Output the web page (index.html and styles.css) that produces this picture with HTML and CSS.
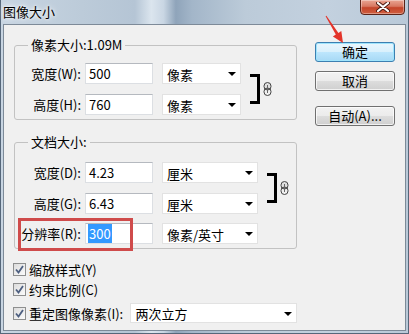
FILE: index.html
```html
<!DOCTYPE html>
<html lang="zh-CN">

<head>
    <meta charset="UTF-8">
    <meta name="viewport" content="width=device-width, initial-scale=1.0">
    <title>图像大小</title>
    <link rel="stylesheet" href="styles.css">
</head>

<body>
    <div class="window">
        <div class="titlebar">
            <span class="title">图像大小</span>
            <div class="close">
                <svg width="14" height="10" viewBox="0 0 14 10">
                    <path d="M2 1 L12 9 M12 1 L2 9" stroke="#4a1a12" stroke-width="4" stroke-linecap="round" />
                    <path d="M2 1 L12 9 M12 1 L2 9" stroke="#fff" stroke-width="2.2" stroke-linecap="round" />
                </svg>
            </div>
        </div>

        <div class="client">
            <div class="main">
                <fieldset class="group group-pixel">
                    <legend>像素大小:1.09M</legend>
                    <div class="linked">
                        <div class="rows">
                            <div class="row">
                                <span class="label">宽度(W):</span>
                                <span class="field">500</span>
                                <span class="combo">像素<i class="arrow"></i></span>
                            </div>
                            <div class="row">
                                <span class="label">高度(H):</span>
                                <span class="field">760</span>
                                <span class="combo">像素<i class="arrow"></i></span>
                            </div>
                        </div>
                        <span class="bracket"></span>
                        <svg class="chain" width="9" height="14" viewBox="0 0 9 14">
                            <rect x="1" y="0.5" width="7" height="7.5" rx="3.5" fill="#e0e0e0" stroke="#444" />
                            <rect x="1" y="6" width="7" height="7.5" rx="3.5" fill="none" stroke="#444" />
                            <line x1="4.5" y1="3" x2="4.5" y2="11" stroke="#666" />
                        </svg>
                    </div>
                </fieldset>

                <fieldset class="group group-doc">
                    <legend>文档大小:</legend>
                    <div class="linked">
                        <div class="rows">
                            <div class="row">
                                <span class="label">宽度(D):</span>
                                <span class="field">4.23</span>
                                <span class="combo wide">厘米<i class="arrow"></i></span>
                            </div>
                            <div class="row">
                                <span class="label">高度(G):</span>
                                <span class="field">6.43</span>
                                <span class="combo wide">厘米<i class="arrow"></i></span>
                            </div>
                        </div>
                        <span class="bracket"></span>
                        <svg class="chain" width="9" height="14" viewBox="0 0 9 14">
                            <rect x="1" y="0.5" width="7" height="7.5" rx="3.5" fill="#e0e0e0" stroke="#444" />
                            <rect x="1" y="6" width="7" height="7.5" rx="3.5" fill="none" stroke="#444" />
                            <line x1="4.5" y1="3" x2="4.5" y2="11" stroke="#666" />
                        </svg>
                    </div>
                    <div class="row row-res">
                        <span class="label">分辨率(R):</span>
                        <span class="field"><span class="sel">300</span></span>
                        <span class="combo wide">像素/英寸<i class="arrow"></i></span>
                        <span class="mark"></span>
                    </div>
                </fieldset>

                <div class="check-row first">
                    <span class="check"><svg width="11" height="11" viewBox="0 0 11 11"><path d="M2 5.5 L4.5 8.5 L9 2" fill="none" stroke="#4d5f80" stroke-width="1.8" /></svg></span>
                    <span>缩放样式(Y)</span>
                </div>
                <div class="check-row">
                    <span class="check"><svg width="11" height="11" viewBox="0 0 11 11"><path d="M2 5.5 L4.5 8.5 L9 2" fill="none" stroke="#4d5f80" stroke-width="1.8" /></svg></span>
                    <span>约束比例(C)</span>
                </div>
                <div class="check-row resample">
                    <span class="check"><svg width="11" height="11" viewBox="0 0 11 11"><path d="M2 5.5 L4.5 8.5 L9 2" fill="none" stroke="#4d5f80" stroke-width="1.8" /></svg></span>
                    <span class="resample-label">重定图像像素(I):</span>
                    <span class="combo method">两次立方<i class="arrow"></i></span>
                </div>
            </div>

            <div class="actions">
                <button class="btn default">确定</button>
                <button class="btn">取消</button>
                <button class="btn auto">自动(A)...</button>
            </div>
        </div>

        <svg class="pointer" width="32" height="36" viewBox="0 0 32 36">
            <polygon points="5.6,6.3 6.4,5.7 18.4,22.9 21.3,21 23,33 12.9,26.4 15.8,24.5" fill="#e3342a" />
        </svg>
    </div>
</body>

</html>
```

FILE: styles.css
```css
body {
    margin: 0;
    font-family: 'Noto Sans CJK SC', 'Microsoft YaHei', sans-serif;
    font-size: 13px;
    color: #000;
}

.window {
    position: relative;
    width: 409px;
    height: 334px;
    display: flex;
    flex-direction: column;
    background: linear-gradient(90deg, #c8d5e2 0%, #bccbd9 20%, #b5c5d5 33%, #dbe5ee 37%, #c9d6e3 40%, #8fa4ba 43%, #a3b6c9 47%, #bccbd9 60%, #c3d1df 80%, #b9c9d8 100%);
    box-shadow: inset 1px 0 #56677a, inset -1px 0 #56677a, inset 0 -1px #56677a;
}

.titlebar {
    height: 24px;
    display: flex;
    justify-content: space-between;
    align-items: flex-start;
}

.title {
    padding: 3px 0 0 3px;
    line-height: 17px;
    font-size: 13px;
    text-shadow: 0 0 6px #fff, 0 0 3px #fff;
}

.close {
    width: 45px;
    height: 16px;
    margin: -1px 4px 0 0;
    box-sizing: border-box;
    border: 1px solid #5a2318;
    border-radius: 0 0 4px 4px;
    background: linear-gradient(#e9a593 0%, #d87862 45%, #c4442a 55%, #cf5f3f 100%);
    box-shadow: inset 0 0 0 1px rgba(255, 255, 255, 0.35);
    display: flex;
    justify-content: center;
    align-items: center;
}

.client {
    margin: 0 3px;
    height: 307px;
    box-sizing: border-box;
    border: 1px solid #7d8a98;
    background-color: #f0f0f0;
    display: flex;
}

.main {
    padding-left: 10px;
    width: 283px;
}

.group {
    margin: 13px 0 0;
    padding: 11px 0 4px;
    width: 283px;
    box-sizing: border-box;
    border: 1px solid #c2c2c2;
    border-radius: 3px;
    min-width: 0;
}

.group legend {
    margin-left: 13px;
    padding: 0 3px;
    line-height: 14px;
}

.group-doc {
    margin-top: 15px;
    padding-top: 13px;
}

.linked {
    display: flex;
    align-items: center;
}

.rows {
    display: flex;
    flex-direction: column;
    gap: 10px;
}

.row {
    display: flex;
    align-items: center;
    height: 21px;
}

.row-res {
    position: relative;
    margin-top: 9px;
}

.label {
    width: 66px;
    text-align: right;
    white-space: nowrap;
}

.field {
    margin-left: 4px;
    width: 68px;
    height: 21px;
    box-sizing: border-box;
    padding-left: 3px;
    line-height: 19px;
    background-color: #fff;
    border: 1px solid #dcdfe3;
    border-top-color: #b5b9bf;
}

.sel {
    background-color: #3399ff;
    color: #fff;
    padding: 0 1px;
    margin-left: -1px;
}

.combo {
    margin-left: 9px;
    width: 79px;
    height: 21px;
    box-sizing: border-box;
    padding: 1px 4px 0 4px;
    line-height: 19px;
    background-color: #fff;
    border: 1px solid #e2e2e2;
    display: flex;
    justify-content: space-between;
    align-items: center;
}

.combo.wide {
    width: 96px;
}

.arrow {
    width: 0;
    height: 0;
    border-left: 4px solid transparent;
    border-right: 4px solid transparent;
    border-top: 4px solid #000;
}

.bracket {
    margin-left: 9px;
    width: 7px;
    height: 24px;
    border: 3px solid #000;
    border-left: none;
}

.chain {
    margin-left: 3px;
}

.mark {
    position: absolute;
    left: 3px;
    top: -5px;
    width: 115px;
    height: 33px;
    box-sizing: border-box;
    border: 3px solid #cf4b4b;
}

.check-row {
    display: flex;
    align-items: center;
    height: 20px;
    margin-left: -1px;
}

.check-row.first {
    margin-top: 10px;
}

.check-row.resample {
    margin-top: 4px;
}

.check {
    width: 13px;
    height: 13px;
    box-sizing: border-box;
    border: 1px solid #8e8f8f;
    background: linear-gradient(135deg, #dcdcdc, #fbfbfb);
    margin-right: 3px;
    display: flex;
    justify-content: center;
    align-items: center;
}

.resample-label {
    width: 101px;
}

.combo.method {
    width: 168px;
    height: 20px;
    padding-left: 5px;
    margin-left: 0;
}

.actions {
    margin: 17px 0 0 18px;
    display: flex;
    flex-direction: column;
    align-items: flex-start;
}

.btn {
    width: 80px;
    height: 20px;
    padding: 0;
    font-family: inherit;
    font-size: 13px;
    line-height: 18px;
    color: #000;
    border: 1px solid #707070;
    border-radius: 3px;
    background: linear-gradient(#f2f2f2 0%, #ebebeb 50%, #dddddd 50%, #cfcfcf 100%);
    box-shadow: inset 0 0 0 1px rgba(255, 255, 255, 0.7);
    margin-bottom: 9px;
}

.btn.default {
    border-color: #3c7fb1;
    background: linear-gradient(#eaf6fd 0%, #d9f0fc 50%, #bee6fd 50%, #a7d9f5 100%);
    box-shadow: inset 0 0 0 1px #9fe4fc;
}

.btn.auto {
    margin-top: 6px;
}

.pointer {
    position: absolute;
    left: 320px;
    top: 10px;
}
```
